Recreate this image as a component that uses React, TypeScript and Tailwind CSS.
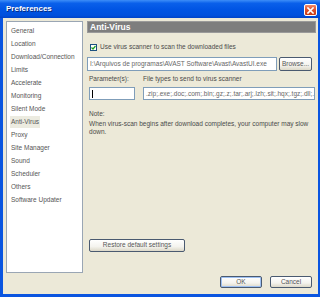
import React from "react";

const items = [
  "General",
  "Location",
  "Download/Connection",
  "Limits",
  "Accelerate",
  "Monitoring",
  "Silent Mode",
  "Anti-Virus",
  "Proxy",
  "Site Manager",
  "Sound",
  "Scheduler",
  "Others",
  "Software Updater",
];

function XPButton({ label, className = "", def = false }: { label: string; className?: string; def?: boolean }) {
  return (
    <div
      className={
        "flex items-center justify-center rounded-[2px] border border-[#4a5a70] bg-[linear-gradient(to_bottom,#ffffff_0%,#f4f3ee_60%,#dcd8c8_100%)] text-[6.5px] leading-none text-[#555] " +
        (def ? "shadow-[inset_0_0_0_1px_#9ec0f2] " : "") +
        className
      }
    >
      {label}
    </div>
  );
}

export default function App() {
  return (
    <div
      className="flex h-[297px] w-[320px] flex-col bg-[#0a55e0] pb-[3px] pl-[3px] pr-[2px] text-[#4a4a4a]"
      style={{ fontFamily: '"Liberation Sans", Arial, sans-serif' }}
    >
      {/* title bar */}
      <div className="-ml-[3px] -mr-[2px] flex h-[18px] items-center justify-between bg-[linear-gradient(to_bottom,#3d8ef8_0%,#0a60ea_18%,#0054e3_55%,#0050dd_85%,#0043c8_100%)] pl-[6px] pr-[3px]">
        <span className="text-[8px] font-bold leading-none text-white [text-shadow:1px_1px_0_#0a2a7a]">
          Preferences
        </span>
        <div className="mt-[2px] flex h-[12px] w-[13px] items-center justify-center rounded-[2px] border border-white bg-[linear-gradient(to_bottom,#f08a6a_0%,#e0522e_45%,#c83a14_100%)]">
          <svg width="7" height="7" viewBox="0 0 7 7">
            <path d="M1 1 L6 6 M6 1 L1 6" stroke="white" strokeWidth="1.6" strokeLinecap="square" />
          </svg>
        </div>
      </div>

      {/* body */}
      <div className="flex flex-1 flex-col bg-[#ece9d8] pl-[3px] pr-[2px] pt-[3px]">
        <div className="flex h-[252px] gap-[4px]">
          {/* list */}
          <div className="flex w-[80px] flex-col border border-[#9aa6b4] bg-white pl-[3px] pt-[2px]">
            {items.map((it) => (
              <div key={it} className="flex h-[13px] items-center">
                <span
                  className={
                    "px-[1px] text-[6.5px] leading-[12px] text-[#555] " +
                    (it === "Anti-Virus" ? "bg-[#ecebe0]" : "")
                  }
                >
                  {it}
                </span>
              </div>
            ))}
          </div>

          {/* right panel */}
          <div className="flex flex-1 flex-col">
            <div className="flex h-[12px] items-center border border-[#9a9a9a] bg-[#7e7e7e] pl-[2px]">
              <span className="text-[8.5px] font-bold leading-none text-white">Anti-Virus</span>
            </div>

            <div className="ml-[3px] mt-[10px] flex h-[8px] items-center gap-[3px]">
              <div className="flex h-[7px] w-[7px] items-center justify-center border border-[#1c5180] bg-white">
                <svg width="5" height="5" viewBox="0 0 5 5">
                  <path d="M0.5 2.5 L2 4 L4.5 1" stroke="#21a121" strokeWidth="1.2" fill="none" />
                </svg>
              </div>
              <span className="text-[6.5px] leading-none">Use virus scanner to scan the downloaded files</span>
            </div>

            <div className="mt-[6px] flex h-[14px] gap-[2px] pr-[4px]">
              <div className="flex flex-1 items-center overflow-hidden whitespace-nowrap border border-[#7f9db9] bg-white pl-[2px] text-[6.5px] text-[#666]">
                I:\Arquivos de programas\AVAST Software\Avast\AvastUI.exe
              </div>
              <XPButton label="Browse..." className="w-[33px]" />
            </div>

            <div className="ml-[2px] mt-[3px] flex gap-[8px] pr-[1px]">
              <div className="flex w-[46px] flex-col">
                <span className="h-[10px] text-[6.5px] leading-[10px]">Parameter(s):</span>
                <div className="mt-[3px] flex h-[13px] items-center border border-[#7f9db9] bg-white pl-[2px]">
                  <div className="h-[8px] w-[1px] bg-black" />
                </div>
              </div>
              <div className="flex flex-1 flex-col">
                <span className="h-[10px] text-[6.5px] leading-[10px]">File types to send to virus scanner</span>
                <div className="mt-[3px] flex h-[13px] items-center overflow-hidden whitespace-nowrap border border-[#7f9db9] bg-white pl-[2px] text-[6.5px] text-[#666]">
                  .zip;.exe;.doc;.com;.bin;.gz;.z;.tar;.arj;.lzh;.sit;.hqx;.tgz;.dll;.
                </div>
              </div>
            </div>

            <div className="ml-[2px] mt-[10px] text-[6.5px] leading-[8px]">Note:</div>
            <div className="ml-[2px] mt-[2px] whitespace-nowrap text-[6.5px] leading-[8px]">
              When virus-scan begins after download completes, your computer may slow
              <br />
              down.
            </div>

            <div className="flex-1" />
            <XPButton label="Restore default settings" className="mb-[21px] ml-[2px] h-[13px] w-[96px]" />
          </div>
        </div>

        <div className="mt-[3px] flex justify-end gap-[8px] pr-[4px]">
          <XPButton label="OK" className="h-[12px] w-[42px]" def />
          <XPButton label="Cancel" className="h-[12px] w-[42px]" />
        </div>
      </div>
    </div>
  );
}
